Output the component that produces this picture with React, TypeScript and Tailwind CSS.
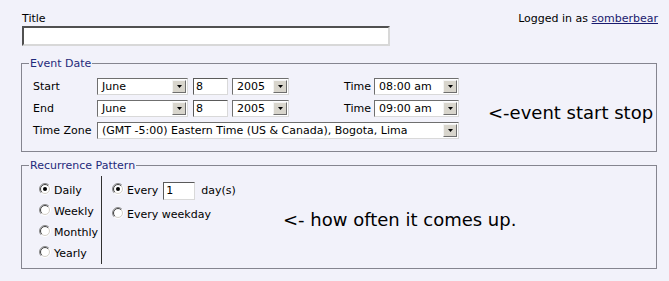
import React from "react";

function Arrow() {
  return (
    <span className="mr-[1px] flex h-[13px] w-[14px] shrink-0 items-center justify-center border border-t-[#f4f4f4] border-l-[#f4f4f4] border-r-[#6e6e6e] border-b-[#6e6e6e] bg-[#d8d5cc]">
      <svg width="5" height="3" viewBox="0 0 5 3">
        <path d="M0 0H5L2.5 3Z" fill="#000" />
      </svg>
    </span>
  );
}

function Select({ value, className }: { value: string; className: string }) {
  return (
    <div
      className={
        "flex h-[17px] items-center border border-t-[#6f6f6f] border-l-[#6f6f6f] border-r-[#d9d9d9] border-b-[#d9d9d9] bg-white " +
        className
      }
    >
      <span className="flex-1 overflow-hidden whitespace-nowrap pl-[4px] text-[11px] leading-[15px] text-black">
        {value}
      </span>
      <Arrow />
    </div>
  );
}

function TextBox({ value, className }: { value: string; className: string }) {
  return (
    <div
      className={
        "flex items-center border border-t-[#5a5a5a] border-l-[#5a5a5a] border-r-[#d9d9d9] border-b-[#d9d9d9] bg-white pl-[2px] text-[11px] leading-[15px] text-black " +
        className
      }
    >
      {value}
    </div>
  );
}

function Radio({ checked }: { checked?: boolean }) {
  const c = 6;
  const pt = (r: number, a: number) => [c + r * Math.cos(a), c + r * Math.sin(a)];
  const arc = (r: number, first: boolean) => {
    const [x1, y1] = first ? pt(r, (3 * Math.PI) / 4) : pt(r, -Math.PI / 4);
    const [x2, y2] = first ? pt(r, -Math.PI / 4) : pt(r, (3 * Math.PI) / 4);
    return `M${x1} ${y1}A${r} ${r} 0 0 1 ${x2} ${y2}`;
  };
  return (
    <svg width="12" height="12" viewBox="0 0 12 12" className="shrink-0">
      <circle cx="6" cy="6" r="4.5" fill="#fff" />
      <path d={arc(5.5, true)} stroke="#8a8a8a" fill="none" />
      <path d={arc(5.5, false)} stroke="#ffffff" fill="none" />
      <path d={arc(4.5, true)} stroke="#404040" fill="none" />
      <path d={arc(4.5, false)} stroke="#d4d0c8" fill="none" />
      {checked && <circle cx="6" cy="6" r="2" fill="#000" />}
    </svg>
  );
}

const TZ = "(GMT -5:00) Eastern Time (US & Canada), Bogota, Lima";

export default function App() {
  return (
    <div className="relative h-[281px] w-[669px] overflow-hidden bg-[#f2f2fa] font-['DejaVu_Sans',Verdana,sans-serif] text-[11px] leading-[13px] text-black">
      {/* header */}
      <div className="flex justify-between pt-[12px]">
        <div className="pl-[22px]">
          <div className="leading-[13px]">Title</div>
          <div className="mt-[1px] h-[20px] w-[368px] border-2 border-t-[#505050] border-l-[#505050] border-r-[#d8d8d8] border-b-[#d8d8d8] bg-white" />
        </div>
        <div className="pr-[11px]">
          Logged in as{" "}
          <a className="text-[#1a1a6e] underline" href="#">
            somberbear
          </a>
        </div>
      </div>

      {/* Event Date */}
      <fieldset className="ml-[21px] mt-[11px] w-[636px] border border-[#85858f] pb-[12px]">
        <legend className="ml-[7px] px-[1px] text-[11px] leading-[13px] text-[#1f2a7a]">Event Date</legend>
        <div className="flex pl-[11px] pt-[8px]">
          <div className="flex flex-col gap-[5px]">
            <div className="flex h-[17px] items-center">
              <span className="w-[64px]">Start</span>
              <Select value="June" className="w-[91px]" />
              <TextBox value="8" className="ml-[5px] h-[17px] w-[35px]" />
              <Select value="2005" className="ml-[4px] w-[57px]" />
              <span className="w-[85px] pr-[3px] text-right">Time</span>
              <Select value="08:00 am" className="w-[85px]" />
            </div>
            <div className="flex h-[17px] items-center">
              <span className="w-[64px]">End</span>
              <Select value="June" className="w-[91px]" />
              <TextBox value="8" className="ml-[5px] h-[17px] w-[35px]" />
              <Select value="2005" className="ml-[4px] w-[57px]" />
              <span className="w-[85px] pr-[3px] text-right">Time</span>
              <Select value="09:00 am" className="w-[85px]" />
            </div>
            <div className="flex h-[17px] items-center">
              <span className="w-[64px] whitespace-nowrap">Time Zone</span>
              <Select value={TZ} className="w-[362px]" />
            </div>
          </div>
          <div className="ml-[29px] mt-[24px] whitespace-nowrap text-[18px] leading-[22px]">&lt;-event start stop</div>
        </div>
      </fieldset>

      {/* Recurrence Pattern */}
      <fieldset className="ml-[21px] mt-[7px] w-[636px] border border-[#85858f] pb-[4px]">
        <legend className="ml-[7px] px-[1px] text-[11px] leading-[13px] text-[#1f2a7a]">Recurrence Pattern</legend>
        <div className="flex pl-[17px] pt-[4px]">
          <div className="flex w-[63px] flex-col border-r border-r-[#303030] pt-[4px]">
            {[
              ["Daily", true],
              ["Weekly", false],
              ["Monthly", false],
              ["Yearly", false],
            ].map(([l, c]) => (
              <div key={l as string} className="flex h-[21px] items-center gap-[3px]">
                <span className="-mt-[4px]">
                  <Radio checked={c as boolean} />
                </span>
                <span className="leading-[13px]">{l as string}</span>
              </div>
            ))}
          </div>
          <div className="flex w-[181px] flex-col pl-[10px] pt-[4px]">
            <div className="flex h-[21px] items-center">
              <span className="-mt-[4px]">
                <Radio checked />
              </span>
              <span className="ml-[3px]">Every</span>
              <TextBox value="1" className="ml-[5px] h-[18px] w-[32px]" />
              <span className="ml-[6px]">day(s)</span>
            </div>
            <div className="mt-[3px] flex h-[21px] items-center">
              <span className="-mt-[4px]">
                <Radio />
              </span>
              <span className="ml-[3px]">Every weekday</span>
            </div>
          </div>
          <div className="mt-[33px] whitespace-nowrap text-[18px] leading-[22px]">&lt;- how often it comes up.</div>
        </div>
      </fieldset>
    </div>
  );
}
